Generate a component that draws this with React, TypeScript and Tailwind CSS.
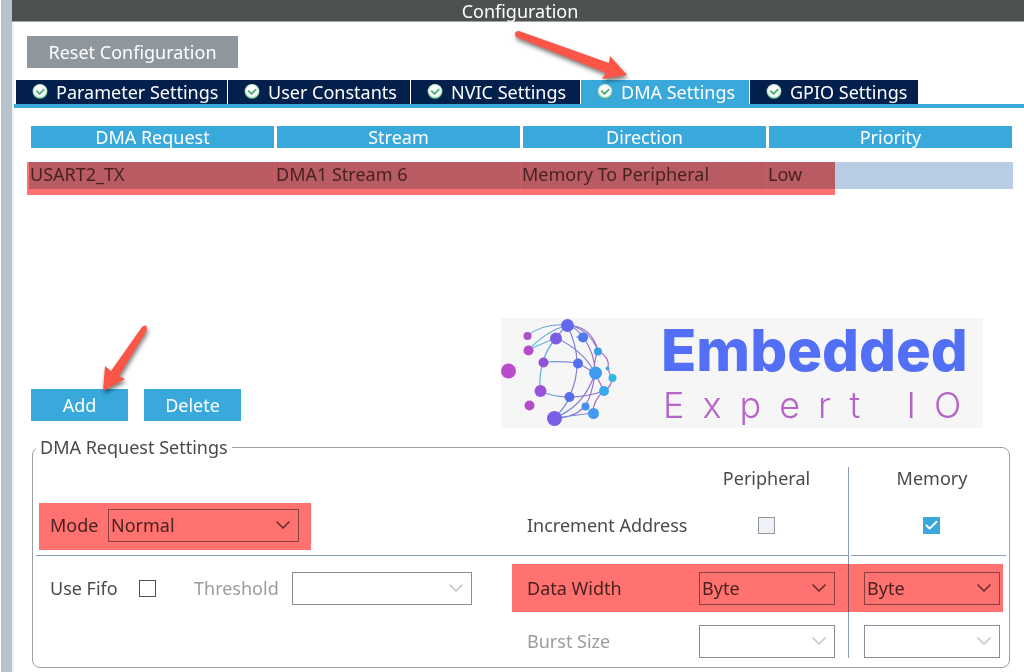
import { useId, useState } from "react";
import { Check, ChevronDown } from "lucide-react";
import clsx from "clsx";

const TABS = [
  { label: "Parameter Settings", width: "w-[211px]" },
  { label: "User Constants", width: "w-[182px]" },
  { label: "NVIC Settings", width: "w-[169px]" },
  { label: "DMA Settings", width: "w-[168px]" },
  { label: "GPIO Settings", width: "w-[168px]" },
];

const COLUMNS = ["DMA Request", "Stream", "Direction", "Priority"];

const REQUESTS = [["USART2_TX", "DMA1 Stream 6", "Memory To Peripheral", "Low"]];

export default function App() {
  const [activeTab, setActiveTab] = useState("DMA Settings");

  return (
    <div className="flex min-h-screen bg-white pl-px font-['Noto_Sans',sans-serif] text-[18px] leading-6 text-[#4a4a4a]">
      <div className="w-[11px] shrink-0 bg-[#b7c4cb]" />
      <main className="relative min-w-0 flex-1 border-l-2 border-[#f1f2f6]">
        <h1 className="-ml-0.5 h-[22px] border-b border-[#a3a5a4] bg-[#4d514f] pl-1 text-center leading-[22px] text-white">
          Configuration
        </h1>

        <div className="px-[13px] pt-3.5">
          <button className="h-8 w-[211px] bg-[#8e979d] text-white">Reset Configuration</button>
        </div>

        <nav role="tablist" className="mt-3 flex gap-px border-b-4 border-[#39a9dc] pl-0.5">
          {TABS.map((tab) => (
            <button
              key={tab.label}
              role="tab"
              aria-selected={tab.label === activeTab}
              onClick={() => setActiveTab(tab.label)}
              className={clsx(
                "flex h-6 items-center gap-2 pl-4 leading-[22px] whitespace-nowrap text-white",
                tab.width,
                tab.label === activeTab ? "bg-[#39a9dc]" : "bg-[#03204d]",
              )}
            >
              <StatusIcon />
              {tab.label}
            </button>
          ))}
        </nav>

        <RequestTable />

        <div className="mt-[129px] flex items-end justify-between pr-[41px] pl-[17px]">
          <div className="flex gap-4 pb-[7px]">
            <button className="h-8 w-[97px] bg-[#39a9dc] text-white">Add</button>
            <button className="h-8 w-[97px] bg-[#39a9dc] text-white">Delete</button>
          </div>
          <Logo />
        </div>

        <RequestSettings />

        {/* callout arrows */}
        <svg
          className="pointer-events-none absolute top-[28px] left-[498px] drop-shadow-[1px_3px_2px_rgba(0,0,0,0.5)]"
          width="124"
          height="56"
          aria-hidden="true"
        >
          <path d="M7 3 L97 35 L98 28 L115 47 L90 51 L94 45 L4 9 Q1 3 7 3Z" fill="#fb5548" />
        </svg>
        <svg
          className="pointer-events-none absolute top-[319px] left-[80px] drop-shadow-[1px_3px_2px_rgba(0,0,0,0.5)]"
          width="60"
          height="80"
          aria-hidden="true"
        >
          <path d="M48 8 Q53 4 53 11 L25 57 L31 60 L9 72 L11 47 L17 52Z" fill="#fb5548" />
        </svg>
      </main>
    </div>
  );
}

function RequestTable() {
  return (
    <div className="relative mt-[18px] mr-[11px] ml-[15px]">
      <table className="w-full table-fixed border-separate border-spacing-0">
        <thead>
          <tr>
            {COLUMNS.map((name) => (
              <th key={name} className="p-0 pb-3.5 font-normal">
                <div className="mr-px ml-0.5 h-[22px] bg-[#39a9dc] leading-[22px] text-white">{name}</div>
              </th>
            ))}
          </tr>
        </thead>
        <tbody>
          {REQUESTS.map((row) => (
            <tr key={row[0]} className="bg-[#b8cce4]">
              {row.map((cell) => (
                <td
                  key={cell}
                  className="h-[27px] border-r border-[#c9d8ea] p-0 pl-px align-top leading-6 whitespace-nowrap last:border-r-0"
                >
                  {cell}
                </td>
              ))}
            </tr>
          ))}
        </tbody>
      </table>
      <div className="pointer-events-none absolute top-9 right-[178px] -left-0.5 h-[33px] bg-[#ff726f] mix-blend-multiply" />
    </div>
  );
}

function RequestSettings() {
  return (
    <fieldset className="mt-[7px] mr-3.5 ml-[18px] min-w-0 rounded-lg border border-[#99a0a6] pt-2 pb-[9px]">
      <legend className="ml-[3px] px-1">DMA Request Settings</legend>
      <div className="grid grid-cols-[1fr_171px_165px_161px] grid-rows-[32px_57px_64px_38px]">
        <div className="col-start-3 row-start-1 pl-0.5 text-center leading-[22px]">Peripheral</div>
        <div className="col-start-4 row-start-1 border-l border-[#8c9abb] pl-1.5 text-center leading-[22px]">Memory</div>

        <div className="col-start-1 row-start-2 ml-[3px] flex items-center border-b border-[#8c9abb] pb-1 pl-3.5">
          <label htmlFor="mode" className="w-[58px]">Mode</label>
          <Dropdown id="mode" className="w-[191px]" options={["Normal", "Circular"]} />
        </div>
        <div className="col-start-2 row-start-2 flex items-center border-b border-[#8c9abb] pb-1 pl-[15px] whitespace-nowrap">
          Increment Address
        </div>
        <div className="col-start-3 row-start-2 flex items-center justify-center border-b border-[#8c9abb] pb-1 pl-0.5">
          <Tick label="Increment peripheral address" disabled />
        </div>
        <div className="col-start-4 row-start-2 border-l border-[#8c9abb]">
          <div className="mr-[3px] ml-0.5 flex h-full items-center justify-center border-b border-[#8c9abb] pb-1 pl-1.5">
            <Tick label="Increment memory address" defaultChecked />
          </div>
        </div>

        <div className="col-start-1 row-start-3 flex items-center pl-[17px]">
          <label htmlFor="fifo" className="w-[89px]">Use Fifo</label>
          <Tick id="fifo" />
          <label htmlFor="threshold" className="ml-[38px] w-[98px] text-[#9c9c9c]">Threshold</label>
          <Dropdown id="threshold" className="w-[180px]" disabled />
        </div>
        <div className="col-start-2 row-start-3 flex items-center pl-[15px]">Data Width</div>
        <div className="col-start-3 row-start-3 flex items-center pr-[13px] pl-4">
          <Dropdown label="Peripheral data width" className="w-full" options={["Byte", "Half Word", "Word"]} />
        </div>
        <div className="col-start-4 row-start-3 flex items-center border-l border-[#8c9abb] pr-[9px] pl-[15px]">
          <Dropdown label="Memory data width" className="w-full" options={["Byte", "Half Word", "Word"]} />
        </div>

        <div className="col-start-2 row-start-4 flex items-end pl-[15px] leading-[33px] text-[#9c9c9c]">
          Burst Size
        </div>
        <div className="col-start-3 row-start-4 flex items-end pr-[13px] pl-4">
          <Dropdown label="Peripheral burst size" className="w-full" disabled />
        </div>
        <div className="col-start-4 row-start-4 flex items-end border-l border-[#8c9abb] pr-[9px] pl-[15px]">
          <Dropdown label="Memory burst size" className="w-full" disabled />
        </div>

        {/* highlighter marks share the grid cells they cover */}
        <div className="pointer-events-none col-start-1 row-start-2 mt-1 ml-1.5 h-[47px] w-[272px] bg-[#ff726f] mix-blend-multiply" />
        <div className="pointer-events-none col-span-3 col-start-2 row-start-3 mr-1.5 h-12 self-center bg-[#ff726f] mix-blend-multiply" />
      </div>
    </fieldset>
  );
}

interface DropdownProps {
  id?: string;
  label?: string;
  className?: string;
  options?: string[];
  disabled?: boolean;
}

function Dropdown({ id, label, className, options = [""], disabled }: DropdownProps) {
  return (
    <div className={clsx("relative", className)}>
      <select
        id={id}
        aria-label={label}
        disabled={disabled}
        className="block h-[33px] w-full appearance-none border border-[#878d94] bg-white pl-0.5 text-[#4a4a4a]"
      >
        {options.map((o) => (
          <option key={o}>{o}</option>
        ))}
      </select>
      <ChevronDown
        className={clsx(
          "pointer-events-none absolute top-1 right-1 size-6",
          disabled ? "text-[#c8c8c8]" : "text-[#6a6a6a]",
        )}
        strokeWidth={1.75}
      />
    </div>
  );
}

interface TickProps {
  id?: string;
  label?: string;
  disabled?: boolean;
  defaultChecked?: boolean;
}

function Tick({ id, label, disabled, defaultChecked }: TickProps) {
  return (
    <span className="relative flex size-[17px]">
      <input
        id={id}
        type="checkbox"
        aria-label={label}
        disabled={disabled}
        defaultChecked={defaultChecked}
        className="peer size-full appearance-none border border-[#505050] bg-white checked:border-[#39a9dc] checked:bg-[#39a9dc] disabled:border-[#92969a] disabled:bg-[#eef1f5]"
      />
      <Check
        className="pointer-events-none absolute inset-0 m-auto hidden size-[15px] text-white peer-checked:block"
        strokeWidth={3}
      />
    </span>
  );
}

function StatusIcon() {
  const id = useId();
  return (
    <svg className="size-4 shrink-0" viewBox="0 0 16 16" aria-hidden="true">
      <defs>
        <radialGradient id={id} cx="50%" cy="45%" r="52%">
          <stop offset="0.6" stopColor="#ffffff" />
          <stop offset="0.82" stopColor="#d4efdc" />
          <stop offset="1" stopColor="#45ad75" />
        </radialGradient>
      </defs>
      <circle cx="8" cy="7.5" r="7.5" fill={`url(#${id})`} />
      <path d="M4.2 6.7 L7.5 10 L12.2 5.1" fill="none" stroke="#4fae7c" strokeWidth="1.9" />
    </svg>
  );
}

const NODES: [number, number, number, string][] = [
  [7.5, 53, 7.5, "#b94bcd"],
  [26.5, 18, 4, "#ad50c8"],
  [27.5, 32.5, 5, "#b74ccb"],
  [28.5, 87.5, 5, "#b24dca"],
  [42.5, 44.5, 5, "#9352d6"],
  [39.5, 73, 6, "#9852db"],
  [55, 20.5, 6, "#7b5de3"],
  [66.5, 7.5, 6.5, "#6368ec"],
  [82, 19.5, 5, "#4e78ee"],
  [77, 45.5, 5, "#5370ec"],
  [68.5, 79, 5, "#5a6cea"],
  [53.5, 100.5, 7.5, "#7a5ee6"],
  [97, 33.5, 4, "#38a0e4"],
  [94.5, 55, 6.5, "#3d9cf0"],
  [106.5, 50.5, 2, "#3eabd8"],
  [111.5, 60, 4, "#30b7e2"],
  [103, 73, 5, "#39a9ee"],
  [84.5, 88.5, 4, "#478df0"],
  [92.5, 95.5, 5.5, "#439af0"],
];

function Logo() {
  const id = useId();
  return (
    <div className="flex h-[110px] w-[482px] bg-[#f6f6f7]">
      <svg className="shrink-0" width="120" height="110" viewBox="0 0 120 110" aria-hidden="true">
        <defs>
          <linearGradient id={id} gradientUnits="userSpaceOnUse" x1="26" y1="0" x2="112" y2="0">
            <stop offset="0" stopColor="#4cc9dc" />
            <stop offset="0.5" stopColor="#7f86d6" />
            <stop offset="1" stopColor="#b060c0" />
          </linearGradient>
        </defs>
        <g fill="none" stroke={`url(#${id})`} strokeWidth="1.2">
          <path d="M26 18 Q42 5 66 7 M27 32 Q44 14 66 7 M27 32 Q45 24 55 20" />
          <path d="M66 7 Q91 8 97 33 M66 7 Q88 10 97 33 M66 7 Q76 10 82 19 M55 20 Q61 12 66 7" />
          <path d="M55 20 Q45 32 42 44 Q38 56 39 73 M42 44 Q60 43 77 45 L94 55 M39 73 Q52 79 68 79 Q86 79 103 73" />
          <path d="M66 7 Q85 45 68 79 Q66 88 53 100 M55 20 Q82 32 94 55 M82 19 Q94 35 94 55 M75 19 L82 19" />
          <path d="M97 33 Q92 44 94 55 Q91 78 84 88 Q74 100 53 100 M94 55 Q83 89 53 100 M94 55 L103 73 M53 100 L92 95" />
          <path d="M97 33 Q109 39 107 50 Q108 55 111 60 Q111 69 103 73 Q92 82 92 95" />
        </g>
        {NODES.map(([cx, cy, r, fill]) => (
          <circle key={`${cx}-${cy}`} cx={cx} cy={cy} r={r} fill={fill} />
        ))}
      </svg>
      <div className="pl-10 font-['Inter',sans-serif] whitespace-nowrap">
        <div className="pt-0.5 text-[58px] leading-[60px] font-extrabold text-[#526ff5]">Embedded</div>
        <div className="pt-0.5 pl-0.5 text-[36px] leading-[46px] font-light tracking-[18px] text-[#b565c8]">Expert IO</div>
      </div>
    </div>
  );
}
